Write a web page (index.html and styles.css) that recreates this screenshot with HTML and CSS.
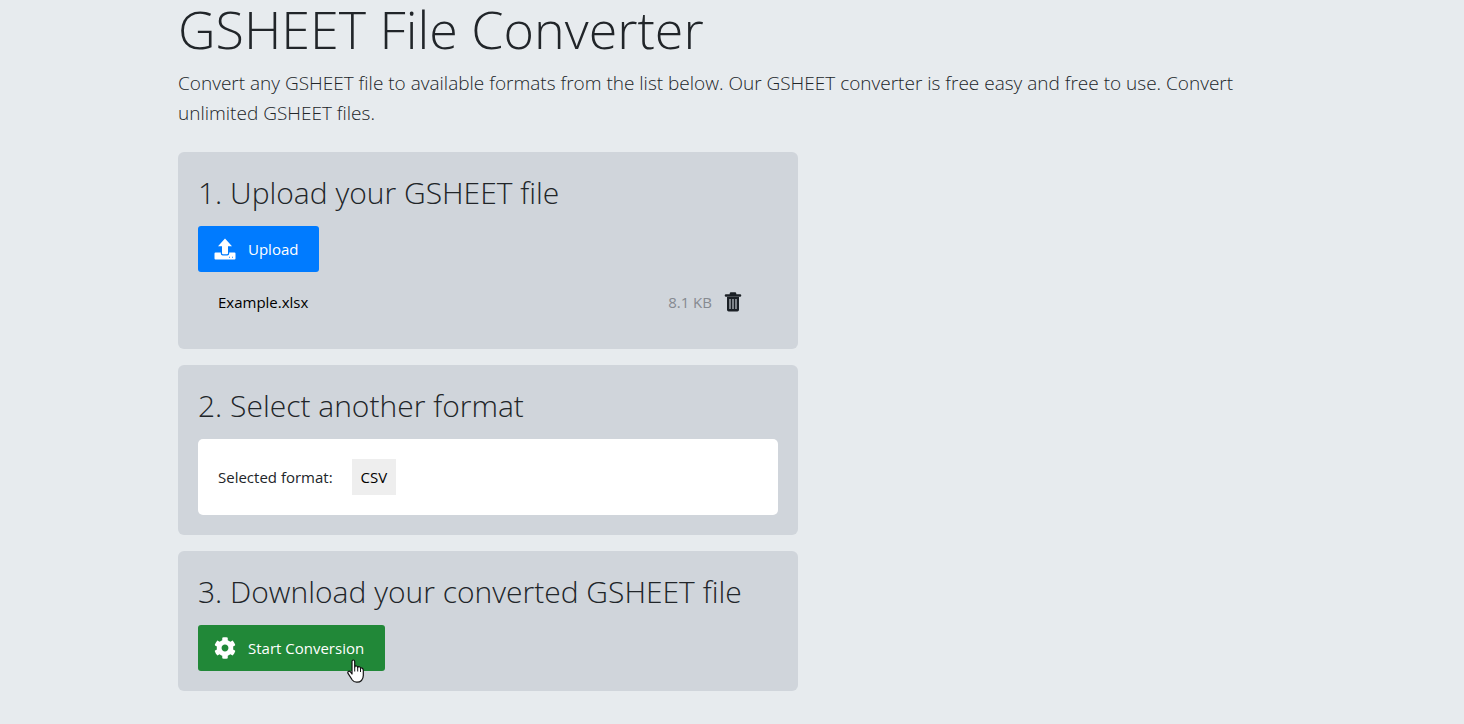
FILE: index.html
```html
<!DOCTYPE html>
<html lang="en">
<head>
  <meta charset="UTF-8" />
  <meta name="viewport" content="width=device-width, initial-scale=1.0" />
  <title>GSHEET File Converter</title>
  <link rel="stylesheet" href="styles.css">
</head>
<body>
  <main class="container">
    <h1>GSHEET File Converter</h1>
    <p class="lead">Convert any GSHEET file to available formats from the list below. Our GSHEET converter is free easy and free to use. Convert unlimited GSHEET files.</p>

    <!-- Step 1 -->
    <section class="step">
      <h2>1. Upload your GSHEET file</h2>
      <button type="button" class="btn btn-upload">
        <svg class="btn-icon" viewBox="0 0 22 22" aria-hidden="true">
          <path fill="#fff" d="M11 0.5 18 8.2H14V15.2Q14 16.2 13 16.2H9Q8 16.2 8 15.2V8.2H4Z" />
          <path fill="#fff" fill-rule="evenodd" d="M1.5 14.5H6.8V15.5Q6.8 17.4 8.7 17.4H13.3Q15.2 17.4 15.2 15.5V14.5H20.5Q21.5 14.5 21.5 15.5V20.5Q21.5 21.5 20.5 21.5H1.5Q0.5 21.5 0.5 20.5V15.5Q0.5 14.5 1.5 14.5ZM15 18.8V19.7H15.9V18.8ZM18 18.8V19.7H18.9V18.8Z" />
        </svg>
        <span>Upload</span>
      </button>
      <div class="file-row">
        <span class="file-name">Example.xlsx</span>
        <span class="file-size">8.1 KB</span>
        <button type="button" class="btn-delete" aria-label="Remove file">
          <svg viewBox="0 0 18 20" aria-hidden="true">
            <path d="M2 3.500H16M7 2.500V1.500H11V2.500" fill="none" stroke="#1b2026" stroke-width="2.600" stroke-linejoin="round" stroke-linecap="round" />
            <path d="M3 5H15V17.800Q15 19.500 13.300 19.500H4.700Q3 19.500 3 17.800Z" fill="#1b2026" />
            <path d="M6 7V17M9 7V17M12 7V17" stroke="#d0d5db" stroke-width="1.100" />
          </svg>
        </button>
      </div>
    </section>

    <!-- Step 2 -->
    <section class="step">
      <h2>2. Select another format</h2>
      <div class="format-box">
        <span>Selected format:</span>
        <button type="button" class="format">CSV</button>
      </div>
    </section>

    <!-- Step 3 -->
    <section class="step">
      <h2>3. Download your converted GSHEET file</h2>
      <button type="button" class="btn btn-convert">
        <svg class="btn-icon" viewBox="0 0 512 512" aria-hidden="true">
          <path fill="#fff" d="M487.4 315.7l-42.6-24.6c4.3-23.2 4.3-47 0-70.2l42.6-24.6c4.9-2.8 7.1-8.6 5.5-14-11.1-35.6-30-67.8-54.7-94.6-3.8-4.1-10-5.1-14.8-2.3L380.8 110c-17.9-15.4-38.5-27.3-60.800-35.100V25.800c0-5.600-3.900-10.500-9.400-11.700-36.700-8.200-74.300-7.800-109.200 0-5.500 1.200-9.400 6.100-9.400 11.700V75c-22.200 7.900-42.800 19.800-60.800 35.100L88.700 85.500c-4.900-2.800-11-1.900-14.800 2.300-24.700 26.700-43.600 58.900-54.700 94.600-1.700 5.400.6 11.200 5.500 14L67.300 221c-4.300 23.200-4.300 47 0 70.200l-42.600 24.600c-4.900 2.800-7.100 8.600-5.500 14 11.100 35.600 30 67.800 54.700 94.600 3.800 4.100 10 5.100 14.800 2.300l42.600-24.600c17.900 15.400 38.500 27.300 60.800 35.100v49.200c0 5.600 3.900 10.500 9.400 11.700 36.700 8.200 74.300 7.800 109.200 0 5.500-1.200 9.400-6.100 9.400-11.700v-49.200c22.200-7.900 42.800-19.800 60.800-35.100l42.600 24.600c4.900 2.800 11 1.900 14.800-2.300 24.700-26.700 43.600-58.900 54.700-94.600 1.500-5.500-.7-11.300-5.600-14.100zM256 336c-44.100 0-80-35.900-80-80s35.900-80 80-80 80 35.900 80 80-35.900 80-80 80z" />
        </svg>
        <span>Start Conversion</span>
        <svg class="pointer" viewBox="0 0 17 24" aria-hidden="true">
          <path fill="#fff" stroke="#111" stroke-width="1.2" stroke-linejoin="round" d="M5 15V2.500Q5 1 6.300 1T7.700 2.500V8Q8 6.800 9.300 7T10.700 8.500Q11.200 7.300 12.400 7.700T13.500 9.300Q14.400 8.400 15.300 9.200T16.300 11V16.500Q16.300 19.500 14.500 21.500Q12.700 23.300 9.700 23.200Q6.800 23.100 5.300 21L1.500 15.200Q.2 13.300 1.300 12.500T3.500 13Z" />
          <path stroke="#111" stroke-width="1" d="M7.700 8V12.500M10.700 8.500V12.500M13.500 9.300V13" />
        </svg>
      </button>
    </section>
  </main>
</body>
</html>
```
FILE: styles.css
```css
* {
  margin: 0;
  padding: 0;
  box-sizing: border-box;
}

body {
  background: #e7ebee;
  color: #212529;
  font-family: "Open Sans", "Noto Sans", sans-serif;
  font-size: 15px;
  line-height: 24px;
}

.container {
  max-width: 1140px;
  margin: 0 auto;
  padding: 0 16px 16px;
}

h1 {
  font-size: 52px;
  font-weight: 300;
  line-height: 58px;
  margin-bottom: 10px;
}

.lead {
  font-size: 19px;
  font-weight: 300;
  line-height: 30px;
  margin-bottom: 24px;
}

.step {
  max-width: 620px;
  margin-bottom: 16px;
  padding: 20px;
  background: #d0d5db;
  border-radius: 6px;
}

h2 {
  font-size: 30px;
  font-weight: 300;
  line-height: 42px;
  margin-bottom: 12px;
}

button {
  border: none;
  font: inherit;
  cursor: pointer;
}

.btn {
  position: relative;
  display: flex;
  align-items: center;
  gap: 12px;
  height: 46px;
  padding: 0 21px 0 16px;
  border-radius: 3px;
  color: #fff;
}

.btn-upload {
  background: #007bff;
}

.btn-convert {
  background: #218838;
}

.btn-icon {
  width: 22px;
  height: 22px;
}

.pointer {
  position: absolute;
  right: 21px;
  bottom: -12px;
  width: 17px;
  height: 24px;
}

.file-row {
  display: flex;
  align-items: center;
  gap: 12px;
  margin: 18px 36px 15px 20px;
}

.file-name {
  flex: 1;
  color: #000;
}

.file-size {
  color: #868a90;
}

.btn-delete {
  height: 24px;
  background: none;
}

.btn-delete svg {
  display: block;
  width: 18px;
  height: 20px;
}

.format-box {
  display: flex;
  align-items: center;
  gap: 19px;
  padding: 20px;
  background: #fff;
  border-radius: 5px;
}

.format {
  height: 36px;
  padding: 0 9px;
  background: #eee;
  color: #000;
}
```
